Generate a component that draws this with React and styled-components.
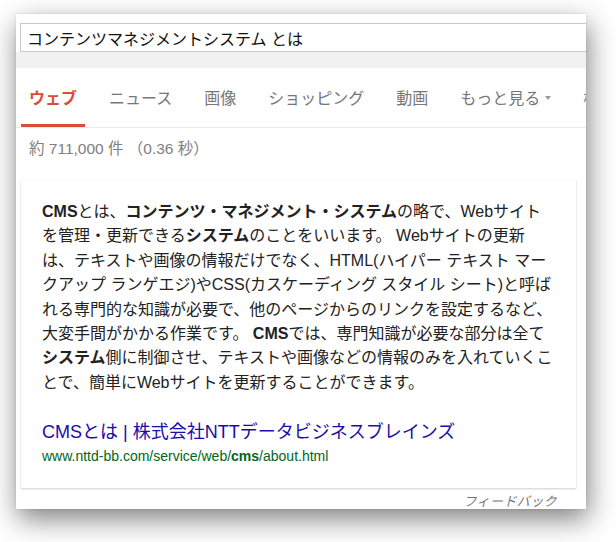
import React from 'react';
import styled, { createGlobalStyle } from 'styled-components';

const GlobalStyle = createGlobalStyle`
  html, body {
    margin: 0;
    padding: 0;
    background: #ffffff;
  }
  body {
    font-family: "Liberation Sans", "Noto Sans CJK JP", sans-serif;
    color: #222;
  }
`;

const Page = styled.div`
  width: 616px;
  height: 542px;
  padding: 14px 0 0 16px;
  box-sizing: border-box;
  overflow: hidden;
`;

const Window = styled.div`
  width: 570px;
  height: 495px;
  background: #fff;
  overflow: hidden;
  box-shadow: 2px 10px 26px rgba(0, 0, 0, 0.5), 0 0 2px rgba(0, 0, 0, 0.12);
`;

const SearchArea = styled.div`
  padding: 9px 0 0 4px;
  height: 38px;
  box-sizing: border-box;
`;

const SearchBox = styled.div`
  width: 640px;
  height: 29px;
  box-sizing: border-box;
  border: 1px solid #c9c9c9;
  padding: 0 0 0 6px;
  display: flex;
  align-items: center;
  font-size: 16px;
  color: #111;
  white-space: nowrap;
`;

const GrayBand = styled.div`
  height: 16px;
  background: #f1f1f1;
`;

const Tabs = styled.div`
  display: flex;
  height: 59px;
  padding-left: 5px;
  border-bottom: 1px solid #ebebeb;
  overflow: hidden;
`;

const Tab = styled.div`
  flex-shrink: 0;
  display: flex;
  align-items: center;
  gap: 5px;
  padding: 2px 8px 0;
  margin-right: 16px;
  font-size: 16px;
  white-space: nowrap;
  color: ${p => (p.$active ? '#dd4b39' : '#777')};
  font-weight: ${p => (p.$active ? 'bold' : 'normal')};
  border-bottom: 3px solid ${p => (p.$active ? '#dd4b39' : 'transparent')};
`;

const Caret = styled.span`
  width: 0;
  height: 0;
  border-left: 3.5px solid transparent;
  border-right: 3.5px solid transparent;
  border-top: 4px solid #999;
  margin-top: 1px;
`;

const Stats = styled.div`
  padding: 11px 0 0 13px;
  height: 20px;
  line-height: 20px;
  font-size: 15.5px;
  color: #808080;
  white-space: nowrap;
`;

const Card = styled.div`
  margin: 21px 0 0 5px;
  width: 555px;
  height: 308px;
  box-sizing: border-box;
  padding: 20px 0 0 21px;
  background: #fff;
  box-shadow: 0 1px 2px rgba(0, 0, 0, 0.18), 0 0 1px rgba(0, 0, 0, 0.1);
`;

const Snippet = styled.div`
  font-size: 16px;
  line-height: 24.4px;
  color: #222;
  white-space: nowrap;

  b {
    font-weight: bold;
  }
`;

const Title = styled.a`
  display: block;
  margin-top: 25px;
  font-size: 18px;
  line-height: 24px;
  color: #1a0dab;
  text-decoration: none;
  white-space: nowrap;
`;

const Url = styled.div`
  margin-top: 3px;
  font-size: 14px;
  line-height: 18px;
  color: #006621;
  white-space: nowrap;
`;

const Feedback = styled.div`
  display: flex;
  justify-content: flex-end;
  padding-right: 29px;
  margin-top: 7px;
  font-size: 13px;
  line-height: 14px;
  font-style: italic;
  letter-spacing: 0.4px;
  color: #777;
`;

const tabs = ['ウェブ', 'ニュース', '画像', 'ショッピング', '動画'];

export default function App() {
  return (
    <>
      <GlobalStyle />
      <Page>
        <Window>
          <SearchArea>
            <SearchBox>コンテンツマネジメントシステム とは</SearchBox>
          </SearchArea>
          <GrayBand />
          <Tabs>
            {tabs.map((t, i) => (
              <Tab key={t} $active={i === 0}>{t}</Tab>
            ))}
            <Tab>
              もっと見る
              <Caret />
            </Tab>
            <Tab>検索ツール</Tab>
          </Tabs>
          <Stats>約 711,000 件 （0.36 秒）</Stats>
          <Card>
            <Snippet>
              <b>CMS</b>とは、<b>コンテンツ・マネジメント・システム</b>の略で、Webサイト<br />
              を管理・更新できる<b>システム</b>のことをいいます。 Webサイトの更新<br />
              は、テキストや画像の情報だけでなく、HTML(ハイパー テキスト マー<br />
              クアップ ランゲエジ)やCSS(カスケーディング スタイル シート)と呼ば<br />
              れる専門的な知識が必要で、他のページからのリンクを設定するなど、<br />
              大変手間がかかる作業です。 <b>CMS</b>では、専門知識が必要な部分は全て<br />
              <b>システム</b>側に制御させ、テキストや画像などの情報のみを入れていくこ<br />
              とで、簡単にWebサイトを更新することができます。
            </Snippet>
            <Title href="#">CMSとは | 株式会社NTTデータビジネスブレインズ</Title>
            <Url>www.nttd-bb.com/service/web/<b>cms</b>/about.html</Url>
          </Card>
          <Feedback>フィードバック</Feedback>
        </Window>
      </Page>
    </>
  );
}
